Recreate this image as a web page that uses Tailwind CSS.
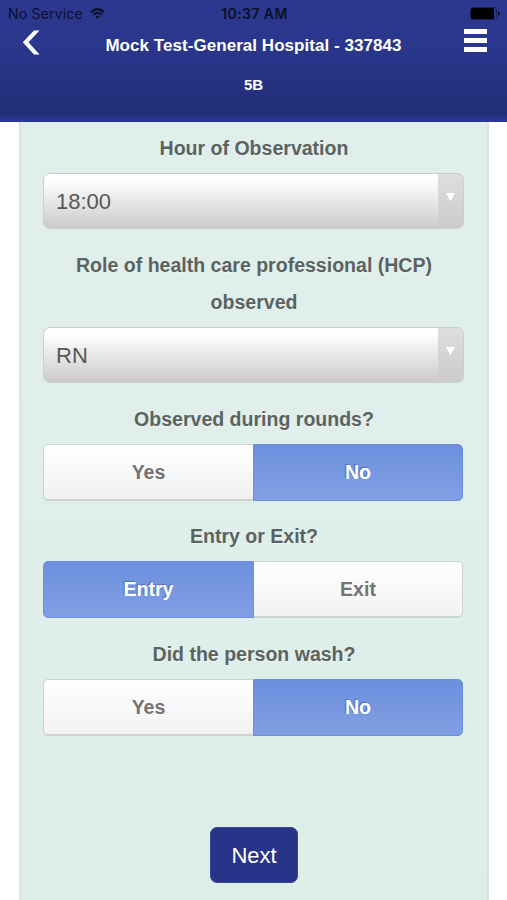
<!DOCTYPE html>
<html lang="en">
<head>
<meta charset="utf-8">
<title>Observation</title>
<script src="https://cdn.jsdelivr.net/npm/@tailwindcss/browser@4"></script>
</head>
<body class="w-[507px] h-[900px] overflow-hidden bg-white font-['Liberation_Sans',sans-serif] flex flex-col">
<header class="h-[122px] shrink-0 bg-[linear-gradient(#2b388f_0%,#2a378c_35%,#232e78_93%,#2b3692_98%,#2b3692_100%)]">
  <div class="h-[27px] grid grid-cols-3 items-center pl-[8px] pr-[6px] text-[#0b0f2b]">
    <div class="flex items-center gap-[7px] font-['Inter',sans-serif] text-[14px] tracking-[0.2px] whitespace-nowrap"><span>No Service</span>
      <svg class="w-[15px] h-[11px]" viewBox="0 0 15 11" fill="none" stroke="currentColor" stroke-width="2"><path d="M.8 4.2Q7.5-2 14.2 4.2M3.2 6.7Q7.5 2.8 11.8 6.7"/><path d="M5.2 8.6Q7.5 6.7 9.800 8.6L7.5 11Z" fill="currentColor" stroke="none"/></svg>
    </div>
    <div class="text-center font-['Inter',sans-serif] font-semibold text-[14px] tracking-[0.4px] whitespace-nowrap">10:37 AM</div>
    <svg class="w-[31px] h-[13px] justify-self-end" viewBox="0 0 31 13"><rect x=".5" y=".5" width="26" height="12" rx="2" fill="none" stroke="#18205c"/><rect x="1" y="1" width="23" height="11" rx="1.5" fill="#000"/><path d="M28 4.2Q30 5 30 6.500T28 8.800Z" fill="#0b0f2b"/></svg>
  </div>
  <div class="h-[36px] grid grid-cols-[60px_1fr_60px] items-center text-white">
    <svg class="w-[20px] h-[26px] ml-[21px] -mt-[7px]" viewBox="0 0 20 26"><path d="M13 1.500H18.500L7.500 13.300L18.500 25.500H13L1.800 13.300Z" fill="#fff"/></svg>
    <h1 class="text-center font-bold text-[17px] tracking-[0.05px] pt-[1px] whitespace-nowrap">Mock Test-General Hospital - 337843</h1>
    <div class="flex flex-col gap-[4px] w-[23px] ml-[17px] -mt-[9px]"><i class="h-[5px] bg-white"></i><i class="h-[5px] bg-white"></i><i class="h-[5px] bg-white"></i></div>
  </div>
  <div class="h-[44px] leading-[44px] text-center font-bold text-[15px] text-white">5B</div>
</header>
<main class="w-[470px] ml-[19px] flex-1 min-h-0 border-x-2 border-[#d8e4e1] bg-linear-to-b from-[#e1efeb] to-[#ddeee9] px-[22px] pt-[8px] flex flex-col text-[#5b6361]">
  <h2 class="text-center font-bold text-[19.55px] leading-[37px] [text-shadow:0_1px_0_#eef5f3]">Hour of Observation</h2>
  <div class="mt-[6px] h-[56px] w-[421px] rounded-[7px] border border-[#c9cecc] bg-linear-to-b from-[#dedede] to-[#cbcbcb] flex overflow-hidden">
    <div class="flex-1 bg-linear-to-b from-white from-10% to-[#cbcbcb] pl-[12px] text-[22px] leading-[55px] text-[#585858]">18:00</div>
    <div class="w-[25px] flex justify-center pt-[19px]"><svg class="w-[9px] h-[9px]" viewBox="0 0 9 9"><path d="M0 0H9L4.500 8.500Z" fill="#fff"/></svg></div>
  </div>
  <h2 class="mt-[18px] text-center font-bold text-[19.55px] leading-[37px] [text-shadow:0_1px_0_#eef5f3]">Role of health care professional (HCP)<br>observed</h2>
  <div class="mt-[6px] h-[56px] w-[421px] shrink-0 rounded-[7px] border border-[#c9cecc] bg-linear-to-b from-[#dedede] to-[#cbcbcb] flex overflow-hidden">
    <div class="flex-1 bg-linear-to-b from-white from-10% to-[#cbcbcb] pl-[12px] text-[22px] leading-[55px] text-[#585858]">RN</div>
    <div class="w-[25px] flex justify-center pt-[19px]"><svg class="w-[9px] h-[9px]" viewBox="0 0 9 9"><path d="M0 0H9L4.500 8.500Z" fill="#fff"/></svg></div>
  </div>
  <h2 class="mt-[18px] text-center font-bold text-[19.55px] leading-[37px] [text-shadow:0_1px_0_#eef5f3]">Observed during rounds?</h2>
  <div class="mt-[6px] h-[57px] w-[420px] grid grid-cols-2 text-center font-bold text-[19.55px] leading-[54px]">
    <div class="rounded-l-[5px] border border-r-0 border-b-2 border-[#cdd3d1] bg-linear-to-b from-white to-[#f1f1f1] text-[#747474]">Yes</div>
    <div class="rounded-r-[5px] border border-[#6b8edb] bg-linear-to-b from-[#6d8fdc] to-[#819fe4] text-white [text-shadow:-1px_-1px_1px_#4f6fb8]">No</div>
  </div>
  <h2 class="mt-[17px] text-center font-bold text-[19.55px] leading-[37px] [text-shadow:0_1px_0_#eef5f3]">Entry or Exit?</h2>
  <div class="mt-[6px] h-[57px] w-[420px] grid grid-cols-[211px_209px] text-center font-bold text-[19.55px] leading-[54px]">
    <div class="rounded-l-[5px] border border-[#6b8edb] bg-linear-to-b from-[#6d8fdc] to-[#819fe4] text-white [text-shadow:-1px_-1px_1px_#4f6fb8]">Entry</div>
    <div class="rounded-r-[5px] border border-l-0 border-b-2 border-[#cdd3d1] bg-linear-to-b from-white to-[#f1f1f1] text-[#747474]">Exit</div>
  </div>
  <h2 class="mt-[18px] text-center font-bold text-[19.55px] leading-[37px] [text-shadow:0_1px_0_#eef5f3]">Did the person wash?</h2>
  <div class="mt-[6px] h-[57px] w-[420px] grid grid-cols-2 text-center font-bold text-[19.55px] leading-[54px]">
    <div class="rounded-l-[5px] border border-r-0 border-b-2 border-[#cdd3d1] bg-linear-to-b from-white to-[#f1f1f1] text-[#747474]">Yes</div>
    <div class="rounded-r-[5px] border border-[#6b8edb] bg-linear-to-b from-[#6d8fdc] to-[#819fe4] text-white [text-shadow:-1px_-1px_1px_#4f6fb8]">No</div>
  </div>
  <button class="mt-[91px] self-center w-[88px] h-[56px] shrink-0 rounded-[7px] border border-[#3b4795] bg-[#283488] text-white text-[22px]">Next</button>
</main>
</body>
</html>
